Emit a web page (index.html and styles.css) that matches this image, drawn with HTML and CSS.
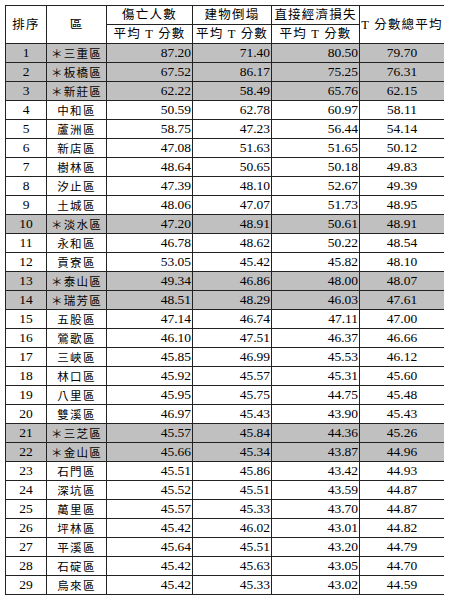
FILE: index.html
```html
<!DOCTYPE html>
<html lang="zh-Hant">
<head>
<meta charset="utf-8">
<link rel="stylesheet" href="styles.css">
</head>
<body>
<table class="rank">
<colgroup>
<col class="c-rank"><col class="c-name"><col class="c-a"><col class="c-b"><col class="c-c"><col class="c-d">
</colgroup>
<thead>
<tr>
<th rowspan="2" class="h">排序</th>
<th rowspan="2" class="h">區</th>
<th class="h">傷亡人數</th>
<th class="h">建物倒塌</th>
<th class="h">直接經濟損失</th>
<th rowspan="2" class="h">T 分數總平均</th>
</tr>
<tr>
<th class="h">平均 T 分數</th>
<th class="h">平均 T 分數</th>
<th class="h">平均 T 分數</th>
</tr>
</thead>
<tbody>
<tr class="hl"><td class="n">1</td><td class="d">＊三重區</td><td class="v">87.20</td><td class="v">71.40</td><td class="v">80.50</td><td class="m">79.70</td></tr>
<tr class="hl"><td class="n">2</td><td class="d">＊板橋區</td><td class="v">67.52</td><td class="v">86.17</td><td class="v">75.25</td><td class="m">76.31</td></tr>
<tr class="hl"><td class="n">3</td><td class="d">＊新莊區</td><td class="v">62.22</td><td class="v">58.49</td><td class="v">65.76</td><td class="m">62.15</td></tr>
<tr><td class="n">4</td><td class="d">中和區</td><td class="v">50.59</td><td class="v">62.78</td><td class="v">60.97</td><td class="m">58.11</td></tr>
<tr><td class="n">5</td><td class="d">蘆洲區</td><td class="v">58.75</td><td class="v">47.23</td><td class="v">56.44</td><td class="m">54.14</td></tr>
<tr><td class="n">6</td><td class="d">新店區</td><td class="v">47.08</td><td class="v">51.63</td><td class="v">51.65</td><td class="m">50.12</td></tr>
<tr><td class="n">7</td><td class="d">樹林區</td><td class="v">48.64</td><td class="v">50.65</td><td class="v">50.18</td><td class="m">49.83</td></tr>
<tr><td class="n">8</td><td class="d">汐止區</td><td class="v">47.39</td><td class="v">48.10</td><td class="v">52.67</td><td class="m">49.39</td></tr>
<tr><td class="n">9</td><td class="d">土城區</td><td class="v">48.06</td><td class="v">47.07</td><td class="v">51.73</td><td class="m">48.95</td></tr>
<tr class="hl"><td class="n">10</td><td class="d">＊淡水區</td><td class="v">47.20</td><td class="v">48.91</td><td class="v">50.61</td><td class="m">48.91</td></tr>
<tr><td class="n">11</td><td class="d">永和區</td><td class="v">46.78</td><td class="v">48.62</td><td class="v">50.22</td><td class="m">48.54</td></tr>
<tr><td class="n">12</td><td class="d">貢寮區</td><td class="v">53.05</td><td class="v">45.42</td><td class="v">45.82</td><td class="m">48.10</td></tr>
<tr class="hl"><td class="n">13</td><td class="d">＊泰山區</td><td class="v">49.34</td><td class="v">46.86</td><td class="v">48.00</td><td class="m">48.07</td></tr>
<tr class="hl"><td class="n">14</td><td class="d">＊瑞芳區</td><td class="v">48.51</td><td class="v">48.29</td><td class="v">46.03</td><td class="m">47.61</td></tr>
<tr><td class="n">15</td><td class="d">五股區</td><td class="v">47.14</td><td class="v">46.74</td><td class="v">47.11</td><td class="m">47.00</td></tr>
<tr><td class="n">16</td><td class="d">鶯歌區</td><td class="v">46.10</td><td class="v">47.51</td><td class="v">46.37</td><td class="m">46.66</td></tr>
<tr><td class="n">17</td><td class="d">三峽區</td><td class="v">45.85</td><td class="v">46.99</td><td class="v">45.53</td><td class="m">46.12</td></tr>
<tr><td class="n">18</td><td class="d">林口區</td><td class="v">45.92</td><td class="v">45.57</td><td class="v">45.31</td><td class="m">45.60</td></tr>
<tr><td class="n">19</td><td class="d">八里區</td><td class="v">45.95</td><td class="v">45.75</td><td class="v">44.75</td><td class="m">45.48</td></tr>
<tr><td class="n">20</td><td class="d">雙溪區</td><td class="v">46.97</td><td class="v">45.43</td><td class="v">43.90</td><td class="m">45.43</td></tr>
<tr class="hl"><td class="n">21</td><td class="d">＊三芝區</td><td class="v">45.57</td><td class="v">45.84</td><td class="v">44.36</td><td class="m">45.26</td></tr>
<tr class="hl"><td class="n">22</td><td class="d">＊金山區</td><td class="v">45.66</td><td class="v">45.34</td><td class="v">43.87</td><td class="m">44.96</td></tr>
<tr><td class="n">23</td><td class="d">石門區</td><td class="v">45.51</td><td class="v">45.86</td><td class="v">43.42</td><td class="m">44.93</td></tr>
<tr><td class="n">24</td><td class="d">深坑區</td><td class="v">45.52</td><td class="v">45.51</td><td class="v">43.59</td><td class="m">44.87</td></tr>
<tr><td class="n">25</td><td class="d">萬里區</td><td class="v">45.57</td><td class="v">45.33</td><td class="v">43.70</td><td class="m">44.87</td></tr>
<tr><td class="n">26</td><td class="d">坪林區</td><td class="v">45.42</td><td class="v">46.02</td><td class="v">43.01</td><td class="m">44.82</td></tr>
<tr><td class="n">27</td><td class="d">平溪區</td><td class="v">45.64</td><td class="v">45.51</td><td class="v">43.20</td><td class="m">44.79</td></tr>
<tr><td class="n">28</td><td class="d">石碇區</td><td class="v">45.42</td><td class="v">45.63</td><td class="v">43.05</td><td class="m">44.70</td></tr>
<tr><td class="n">29</td><td class="d">烏來區</td><td class="v">45.42</td><td class="v">45.33</td><td class="v">43.02</td><td class="m">44.59</td></tr>
</tbody>
</table>
</body>
</html>
```
FILE: styles.css
```css
html, body {
  background: #ffffff;
}
body {
  margin: 5px;
  color: #000000;
  font-family: "Liberation Serif", "Noto Sans CJK TC", serif;
}
.rank {
  border-collapse: collapse;
  table-layout: fixed;
  width: 440px;
  border: 1px solid #222222;
}
.c-rank { width: 41px; }
.c-name { width: 60px; }
.c-a { width: 86px; }
.c-b { width: 79px; }
.c-c { width: 88px; }
.c-d { width: 85px; }
.rank th,
.rank td {
  border: 1px solid #222222;
  padding: 0;
  height: 18px;
  line-height: 18px;
  white-space: nowrap;
  overflow: hidden;
}
.rank th {
  font-weight: normal;
  font-family: "Liberation Serif", "Noto Sans CJK TC", serif;
  font-size: 12.5px;
  letter-spacing: 1.2px;
  text-align: center;
  vertical-align: middle;
}
.rank td {
  font-size: 13.5px;
}
.rank .n {
  text-align: center;
}
.rank .d {
  text-align: center;
  font-family: "Noto Sans CJK TC", serif;
  font-size: 11.5px;
  letter-spacing: 1.3px;
}
.rank .v {
  text-align: right;
  padding-right: 1px;
}
.rank .m {
  text-align: center;
}
.rank .hl td {
  background: #c0c0c0;
}
```
